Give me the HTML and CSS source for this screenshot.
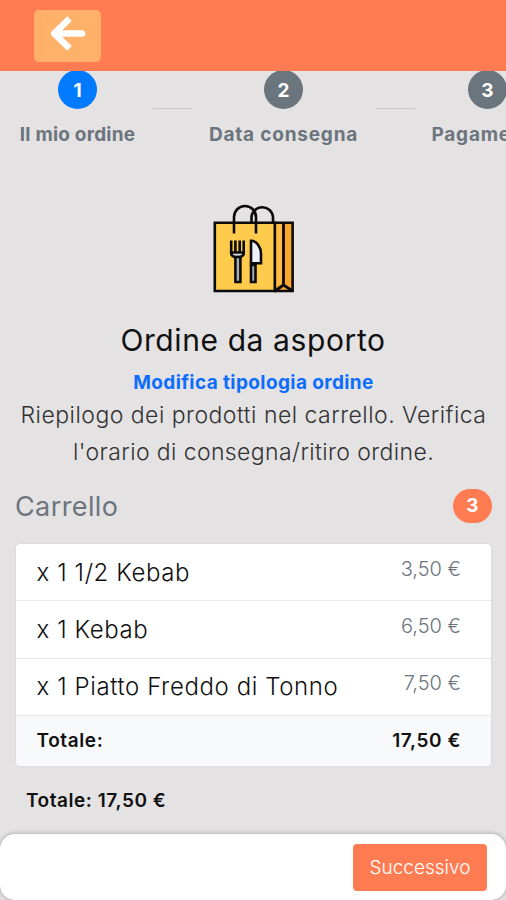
FILE: index.html
```html
<!DOCTYPE html>
<html lang="it">
<head>
<meta charset="utf-8">
<title>Ordine da asporto</title>
<link rel="stylesheet" href="styles.css">
</head>
<body>
<header class="topbar">
  <button class="back" aria-label="Indietro">
    <svg width="36" height="36" viewBox="0 0 36 36" fill="none" stroke="#fff" stroke-width="6.6" stroke-linejoin="round"><path d="M19.5 2.6 4.2 17.5 19.5 32.4" stroke-linecap="butt"/><path d="M5 17.5H32" stroke-linecap="round"/></svg>
  </button>
</header>
<nav class="steps">
  <div class="step step-first"><span class="dot active">1</span><span class="label">Il mio ordine</span></div>
  <i class="line"></i>
  <div class="step step-second"><span class="dot">2</span><span class="label">Data consegna</span></div>
  <i class="line"></i>
  <div class="step step-third"><span class="dot">3</span><span class="label">Pagamento</span></div>
</nav>
<main>
  <section class="intro">
    <svg class="bag" width="82" height="90" viewBox="0 0 82 90" fill="none" stroke="#0b0b0b" stroke-width="2.6">
      <path d="M1.8 18.8H62V87H1.8z" fill="#ffcb4c"/>
      <path d="M62 18.8H79.6V87H62z" fill="#f9a72b"/>
      <path d="M63.5 20H69V79L63.5 83z" fill="#ffb947" stroke="none"/>
      <path d="M70.5 20V80M62 87l8.5-6 9.1 6" stroke-width="2.8"/>
      <path d="M21 29.5V13A10.800 10.800 0 0 1 43 13V29.500M38.500 18V13A10.800 10.800 0 0 1 60 13V18"/>
      <path d="M18.2 36.5V49c0 2 2 3.5 4 3.5h4.500c2 0 4-1.500 4-3.500V36.500M22.400 36.500V48M26.700 36.500V48"/>
      <path d="M18.200 48.500h12.500c0 3-2 4-3.500 4.500h-5.500c-1.500-.5-3.500-1.500-3.500-4.500z" fill="#dfe5ee"/>
      <path d="M22.400 53h5v25h-5z" fill="#a9afb8"/>
      <path d="M38 36.800c6 0 10 7 10 13v9.500H38z" fill="#edf2fa"/>
      <path d="M38 61h4.500v17H38z" fill="#a9afb8"/>
    </svg>
    <h1>Ordine da asporto</h1>
    <a class="change">Modifica tipologia ordine</a>
    <p>Riepilogo dei prodotti nel carrello. Verifica<br><span class="second">l'orario di consegna/ritiro ordine.</span></p>
  </section>
  <section class="cart">
    <h2><span>Carrello</span><b class="badge">3</b></h2>
    <ul>
      <li><span class="name">x 1 1/2 Kebab</span><span class="price">3,50 €</span></li>
      <li><span class="name">x 1 Kebab</span><span class="price">6,50 €</span></li>
      <li><span class="name">x 1 Piatto Freddo di Tonno</span><span class="price">7,50 €</span></li>
      <li class="sum"><span>Totale:</span><span>17,50 €</span></li>
    </ul>
    <div class="total">Totale: 17,50 €</div>
  </section>
</main>
<footer><button class="next">Successivo</button></footer>
</body>
</html>
```

FILE: styles.css
```css
* { box-sizing: border-box; }
body {
  margin: 0;
  height: 900px;
  overflow: hidden;
  display: flex;
  flex-direction: column;
  background: #e4e2e3;
  color: #111;
  font-family: Inter, sans-serif;
  white-space: nowrap;
}
button { border: 0; font-family: inherit; }
.topbar { flex: none; height: 71px; padding: 10px 34px; background: #ff7c53; }
.back {
  width: 67px;
  height: 52px;
  padding: 0 0 5px;
  border-radius: 5px;
  background: #ffb069;
  display: flex;
  justify-content: center;
  align-items: center;
}
.steps {
  flex: none;
  height: 133px;
  padding-left: 20px;
  display: flex;
  align-items: flex-start;
  gap: 17.5px;
  overflow: hidden;
}
.step { flex: none; display: flex; flex-direction: column; align-items: center; }
.step-first { width: 115px; }
.step-second { width: 149px; }
.step-third { width: 111px; }
.dot {
  width: 39px;
  height: 39px;
  margin-top: -1px;
  border-radius: 50%;
  background: #6b757d;
  color: #fff;
  font-size: 19px;
  font-weight: 700;
  line-height: 41px;
  text-align: center;
}
.dot.active { background: #007bff; }
.label { margin-top: 13px; color: #6c757d; font-size: 19px; font-weight: 700; line-height: 26px; letter-spacing: .8px; }
.step-first .label { letter-spacing: .2px; }
.line { flex: none; width: 39px; height: 1px; margin-top: 37px; background: #c9c8c9; }
.intro { display: flex; flex-direction: column; align-items: center; }
.bag { display: block; margin-left: 2px; }
h1 { margin: 28px 0 0; font-size: 30px; font-weight: 400; line-height: 36px; letter-spacing: .6px; }
.change { margin: 13px 0 0 1px; color: #0d6efd; font-size: 19px; font-weight: 700; line-height: 24px; letter-spacing: .4px; }
p { margin: 2px 0 0 1px; color: #333; font-size: 23px; font-weight: 300; line-height: 36.6px; letter-spacing: .48px; text-align: center; }
.second { letter-spacing: .39px; }
.cart { padding: 0 14px 0 15px; }
h2 {
  margin: 18px 0 0;
  height: 36px;
  display: flex;
  justify-content: space-between;
  align-items: center;
  color: #6c757d;
  font-size: 27px;
  font-weight: 400;
  letter-spacing: .4px;
}
.badge {
  width: 39px;
  height: 34px;
  border-radius: 17px;
  background: #ff7c53;
  color: #fff;
  font-size: 19px;
  line-height: 34px;
  letter-spacing: 0;
  text-align: center;
}
ul {
  list-style: none;
  margin: 19px 0 0;
  padding: 0;
  border: 1px solid #dcdbdc;
  border-radius: 5px;
  overflow: hidden;
  background: #fff;
}
li {
  height: 57.2px;
  padding: 0 30px 0 20.5px;
  display: flex;
  justify-content: space-between;
  align-items: center;
  border-bottom: 1px solid #e7e7e8;
}
.name { font-size: 24px; font-weight: 300; letter-spacing: .6px; }
.price { margin-bottom: 7px; color: #6c757d; font-size: 20px; font-weight: 300; }
.sum { height: 50px; border: 0; background: #f8f9fb; font-size: 19px; font-weight: 600; letter-spacing: .6px; }
.total { margin: 22px 0 0 11px; font-size: 19px; font-weight: 600; line-height: 24px; letter-spacing: .55px; }
footer {
  flex: none;
  height: 66px;
  margin-top: auto;
  padding: 10px 19px;
  display: flex;
  justify-content: flex-end;
  border-radius: 15px;
  background: #fff;
  box-shadow: 0 0 5px rgba(0, 0, 0, .3);
}
.next { width: 134px; height: 47px; padding: 0; border-radius: 4px; background: #ff7c53; color: #fff; font-size: 19px; font-weight: 300; }
```
